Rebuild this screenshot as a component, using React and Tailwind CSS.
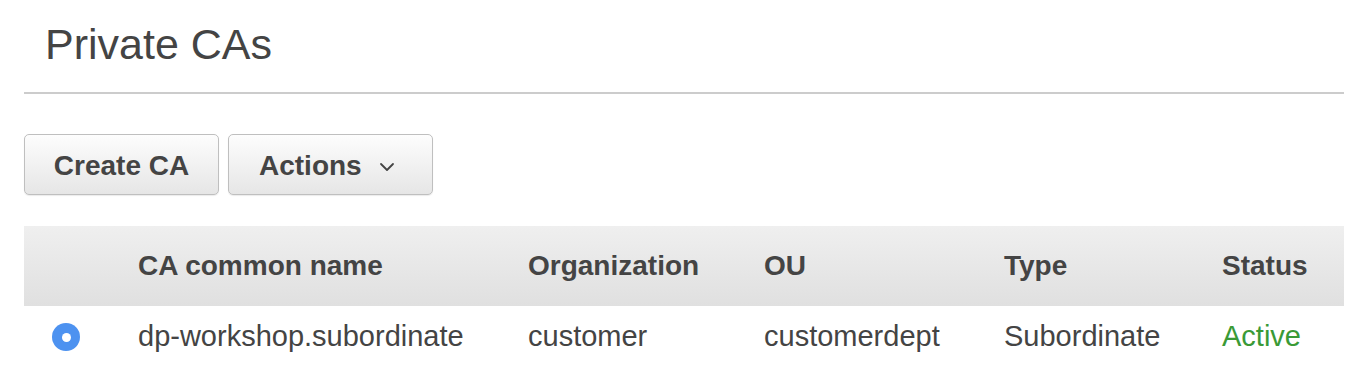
const columns = [
  { key: 'name', label: 'CA common name', width: 'w-[390px]' },
  { key: 'org', label: 'Organization', width: 'w-[236px]' },
  { key: 'ou', label: 'OU', width: 'w-[240px]' },
  { key: 'type', label: 'Type', width: 'w-[218px]' },
  { key: 'status', label: 'Status', width: 'flex-1' },
];

const rows = [
  {
    name: 'dp-workshop.subordinate',
    org: 'customer',
    ou: 'customerdept',
    type: 'Subordinate',
    status: 'Active',
  },
];

function Button({ children, className = '' }) {
  return (
    <button
      type="button"
      className={`h-[61px] flex items-center pt-[3px] rounded-[5px] border border-[#bfbfbf] bg-gradient-to-b from-[#fdfdfd] to-[#e6e6e6] text-[28px] font-bold text-[#444] shadow-[0_1px_1px_rgba(0,0,0,0.08)] ${className}`}
    >
      {children}
    </button>
  );
}

export default function App() {
  return (
    <div className="w-[1370px] h-[368px] bg-white overflow-hidden font-['Liberation_Sans',Arial,sans-serif] text-[#444]">
      <div className="px-6">
        <h1 className="pl-[21px] pt-[18px] h-[92px] text-[43px] leading-[52px] text-[#444]">Private CAs</h1>
        <div className="h-[2px] w-[1320px] bg-[#cccccc]"></div>

        <div className="flex gap-[9px] mt-[40px]">
          <Button className="w-[195px] justify-center">Create CA</Button>
          <Button className="w-[205px] pl-[30px]">
            Actions
            <svg width="16" height="10" viewBox="0 0 16 10" className="ml-[17px] mt-[2px]" fill="none" stroke="#444" strokeWidth="1.8" strokeLinecap="round" strokeLinejoin="round">
              <polyline points="2,2 8,8 14,2" />
            </svg>
          </Button>
        </div>

        <div className="mt-[31px] w-[1320px]">
          <div className="flex items-center h-[80px] bg-gradient-to-b from-[#efefef] to-[#e0e0e0] text-[28px] font-bold">
            <div className="w-[114px]"></div>
            {columns.map((c) => (
              <div key={c.key} className={c.width}>{c.label}</div>
            ))}
          </div>
          {rows.map((r, i) => (
            <div key={i} className="flex items-center h-[62px] text-[29px]">
              <div className="w-[114px] flex items-center pl-[28px]">
                <span className="w-[28px] h-[28px] rounded-full bg-[#4d92f0] flex items-center justify-center">
                  <span className="w-[9px] h-[9px] rounded-full bg-white"></span>
                </span>
              </div>
              {columns.map((c) => (
                <div key={c.key} className={`${c.width} ${c.key === 'status' ? 'text-[#3a9a36]' : ''}`}>
                  {r[c.key]}
                </div>
              ))}
            </div>
          ))}
        </div>
      </div>
    </div>
  );
}
